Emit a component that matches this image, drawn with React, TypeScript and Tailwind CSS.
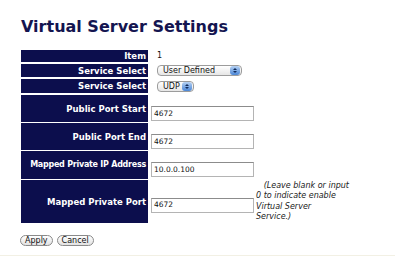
import React from 'react';

const navy = 'bg-[#0c0e4d]';

function Label({ children, tight }: { children: React.ReactNode; tight?: boolean }) {
    return (
        <div
            className={`${navy} w-[127px] shrink-0 flex items-center justify-end pr-[2px] text-white font-bold leading-[10px] whitespace-nowrap ${
                tight ? 'text-[8px] tracking-[-0.25px]' : 'text-[8.5px]'
            }`}
        >
            {children}
        </div>
    );
}

function Popup({ value, width }: { value: string; width: string }) {
    return (
        <div className={`${width} h-[11px] rounded-[4px] border border-[#9c9c9c] bg-gradient-to-b from-white to-[#e6e6e6] flex items-center justify-between pl-[5px] pr-[1px]`}>
            <span className="text-[8px] leading-[9px] text-[#111]">{value}</span>
            <span className="w-[10px] h-[9px] rounded-[3px] bg-gradient-to-b from-[#b4d0f2] to-[#4a86d6] flex flex-col items-center justify-center gap-[1px]">
                <span className="w-0 h-0 border-l-[2px] border-r-[2px] border-b-[2px] border-l-transparent border-r-transparent border-b-[#0f2a5a]" />
                <span className="w-0 h-0 border-l-[2px] border-r-[2px] border-t-[2px] border-l-transparent border-r-transparent border-t-[#0f2a5a]" />
            </span>
        </div>
    );
}

function TextBox({ value }: { value: string }) {
    return (
        <div className="w-[103px] h-[15px] border border-[#b4b4b4] border-t-[#8c8c8c] bg-white flex items-center pl-[2px] text-[7.5px] text-[#111]">
            {value}
        </div>
    );
}

function Pill({ children }: { children: React.ReactNode }) {
    return (
        <button className="h-[11px] px-[4px] rounded-full border border-[#8a8a8a] bg-gradient-to-b from-white to-[#e2e2e2] text-[8px] leading-[8px] text-[#111] flex items-center">
            {children}
        </button>
    );
}

export default function App() {
    return (
        <div className="w-[395px] h-[257px] bg-white relative overflow-hidden" style={{ fontFamily: '"DejaVu Sans", Verdana, sans-serif' }}>
            <div className="pl-[21px] pt-[17px]">
                <h1 className="text-[16px] leading-[20px] font-bold text-[#141550]">Virtual Server Settings</h1>

                <div className="mt-[13px] flex flex-col">
                    <div className="flex h-[12px]">
                        <Label>Item</Label>
                        <div className="pl-[9px] flex items-center text-[8px] text-[#111]">1</div>
                    </div>
                    <div className="flex h-[13px] mt-[2px]">
                        <Label>Service Select</Label>
                        <div className="pl-[9px] flex items-center">
                            <Popup value="User Defined" width="w-[85px]" />
                        </div>
                    </div>
                    <div className="flex h-[14px] mt-[2px]">
                        <Label>Service Select</Label>
                        <div className="pl-[9px] flex items-center">
                            <Popup value="UDP" width="w-[37px]" />
                        </div>
                    </div>
                    <div className="flex h-[27px] mt-[2px]">
                        <Label>Public Port Start</Label>
                        <div className="pl-[3px] flex items-end pb-[1px]">
                            <TextBox value="4672" />
                        </div>
                    </div>
                    <div className="flex h-[27px] mt-[1px]">
                        <Label>Public Port End</Label>
                        <div className="pl-[3px] flex items-end pb-[1px]">
                            <TextBox value="4672" />
                        </div>
                    </div>
                    <div className="flex h-[28px] mt-[1px]">
                        <Label tight>Mapped Private IP Address</Label>
                        <div className="pl-[3px] flex items-end pb-[2px]">
                            <TextBox value="10.0.0.100" />
                        </div>
                    </div>
                    <div className="flex h-[43px] mt-[1px]">
                        <Label>Mapped Private Port</Label>
                        <div className="pl-[3px] flex items-center pt-[7px]">
                            <TextBox value="4672" />
                        </div>
                        <div className="pl-[2px] flex items-center">
                            <p className="italic text-[8px] leading-[10.5px] text-[#222] whitespace-nowrap">
                                &nbsp;&nbsp;&nbsp;(Leave blank or input<br />
                                0 to indicate enable<br />
                                Virtual Server<br />
                                Service.)
                            </p>
                        </div>
                    </div>
                </div>

                <div className="mt-[12px] -ml-[1px] flex gap-[4px]">
                    <Pill>Apply</Pill>
                    <Pill>Cancel</Pill>
                </div>
            </div>
            <div className="absolute left-0 right-0 bottom-[1px] h-[1px] bg-[#f2f0e4]" />
        </div>
    );
}
